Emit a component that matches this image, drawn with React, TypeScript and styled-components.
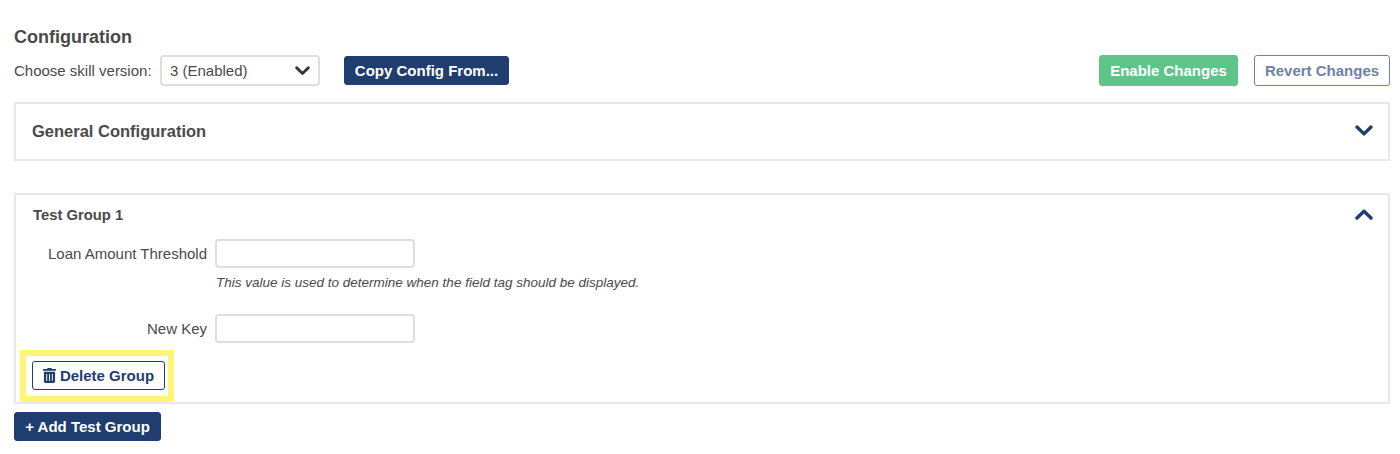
import React from "react";
import styled, { createGlobalStyle } from "styled-components";

const Global = createGlobalStyle`
  html, body { margin: 0; padding: 0; background: #fff; }
  body { font-family: "Liberation Sans", Arial, sans-serif; color: #4a4a4a; }
`;

const Page = styled.div`
  box-sizing: border-box;
  width: 1400px;
  height: 454px;
  overflow: hidden;
  padding: 26px 10px 0 14px;
`;

const Title = styled.h2`
  margin: 0;
  font-size: 18px;
  line-height: 22px;
  font-weight: 700;
  color: #4a4a4a;
`;

const Toolbar = styled.div`
  display: flex;
  align-items: center;
  height: 31px;
  margin-top: 7px;
`;

const ToolLabel = styled.span`
  font-size: 15px;
  color: #4a4a4a;
  width: 146px;
  white-space: nowrap;
`;

const SelectBox = styled.div`
  box-sizing: border-box;
  width: 160px;
  height: 31px;
  border: 2px solid #dedede;
  border-radius: 4px;
  display: flex;
  align-items: center;
  justify-content: space-between;
  padding: 0 8px;
  font-size: 15px;
  color: #4a4a4a;
`;

const Button = styled.button<{ $variant?: "primary" | "success" | "outline" | "ghost"; $h?: number }>`
  box-sizing: border-box;
  height: ${(p) => p.$h ?? 29}px;
  padding: 0;
  border-radius: 3px;
  font-family: "Liberation Sans", Arial, sans-serif;
  font-size: 15px;
  font-weight: 700;
  white-space: nowrap;
  display: inline-flex;
  align-items: center;
  justify-content: center;
  cursor: pointer;
  background: ${(p) => (p.$variant === "success" ? "#5fc48a" : p.$variant === "outline" || p.$variant === "ghost" ? "#fff" : "#1f3d6f")};
  color: ${(p) => (p.$variant === "outline" ? "#1f3d6f" : p.$variant === "ghost" ? "#6f82a6" : "#fff")};
  border: 1px solid ${(p) => (p.$variant === "success" ? "#5fc48a" : p.$variant === "ghost" ? "#6f82a6" : "#1f3d6f")};
`;

const CopyButton = styled(Button)`
  margin-left: 24px;
  width: 165px;
`;

const EnableButton = styled(Button)`
  width: 139px;
`;

const RevertButton = styled(Button)`
  width: 136px;
`;

const DeleteButton = styled(Button)`
  width: 133px;
`;

const ActionGroup = styled.div`
  margin-left: auto;
  display: flex;
  gap: 16px;
`;

const Panel = styled.section`
  box-sizing: border-box;
  border: 2px solid #e8e8e8;
`;

const GeneralPanel = styled(Panel)`
  height: 59px;
  margin-top: 16px;
  display: flex;
  align-items: center;
  justify-content: space-between;
  padding: 0 15.5px 0 16px;
`;

const GeneralTitle = styled.h3`
  margin: 0;
  font-size: 16.5px;
  font-weight: 700;
  color: #4a4a4a;
`;

const GroupPanel = styled(Panel)`
  height: 211px;
  margin-top: 32px;
  padding: 11px 15.5px 0 4px;
`;

const GroupHeader = styled.div`
  display: flex;
  align-items: center;
  justify-content: space-between;
  height: 18px;
  padding-left: 13px;
`;

const GroupTitle = styled.h4`
  margin: 0;
  font-size: 14.8px;
  line-height: 18px;
  font-weight: 700;
  color: #4a4a4a;
`;

const FieldRow = styled.div<{ $top: number }>`
  display: grid;
  grid-template-columns: 187px 200px;
  column-gap: 8px;
  align-items: center;
  margin-top: ${(p) => p.$top}px;
`;

const FieldLabel = styled.label`
  text-align: right;
  font-size: 15px;
  color: #4a4a4a;
`;

const TextField = styled.input`
  box-sizing: border-box;
  width: 200px;
  height: 29px;
  border: 2px solid #dedede;
  border-radius: 4px;
  background: #fff;
  outline: none;
`;

const Hint = styled.p`
  margin: 7px 0 0 196px;
  font-size: 13.5px;
  line-height: 16px;
  font-style: italic;
  color: #4a4a4a;
`;

const Highlight = styled.div`
  box-sizing: border-box;
  width: 154px;
  height: 52px;
  margin-top: 7px;
  border: 6px solid #fff577;
  padding: 5px 0 0 6px;
`;

const TrashIcon = styled.svg`
  width: 13px;
  height: 15px;
  margin-right: 4px;
  fill: currentColor;
`;

const AddButton = styled(Button)`
  margin-top: 8px;
  width: 147px;
`;

const ChevronIcon = styled.svg<{ $w: number; $lift: number }>`
  width: ${(p) => p.$w}px;
  height: ${(p) => p.$w * 0.62}px;
  margin-bottom: ${(p) => p.$lift}px;
  flex: none;
`;

const Chevron = ({ up, size = 18, color = "#1f3d6f", weight = 3.4, lift = 0 }: { up?: boolean; size?: number; color?: string; weight?: number; lift?: number }) => (
  <ChevronIcon $w={size} $lift={lift} viewBox="0 0 18 11" fill="none">
    <path
      d={up ? "M2 9 L9 2.2 L16 9" : "M2 2 L9 8.8 L16 2"}
      stroke={color}
      strokeWidth={weight}
      strokeLinecap="round"
      strokeLinejoin="round"
    />
  </ChevronIcon>
);

export default function App() {
  return (
    <Page>
      <Global />
      <Title>Configuration</Title>
      <Toolbar>
        <ToolLabel>Choose skill version:</ToolLabel>
        <SelectBox>
          3 (Enabled)
          <Chevron size={15} color="#333" />
        </SelectBox>
        <CopyButton>Copy Config From...</CopyButton>
        <ActionGroup>
          <EnableButton $variant="success" $h={31}>Enable Changes</EnableButton>
          <RevertButton $variant="ghost" $h={31}>Revert Changes</RevertButton>
        </ActionGroup>
      </Toolbar>
      <GeneralPanel>
        <GeneralTitle>General Configuration</GeneralTitle>
        <Chevron lift={2} />
      </GeneralPanel>
      <GroupPanel>
        <GroupHeader>
          <GroupTitle>Test Group 1</GroupTitle>
          <Chevron up />
        </GroupHeader>
        <FieldRow $top={15}>
          <FieldLabel>Loan Amount Threshold</FieldLabel>
          <TextField />
        </FieldRow>
        <Hint>This value is used to determine when the field tag should be displayed.</Hint>
        <FieldRow $top={23}>
          <FieldLabel>New Key</FieldLabel>
          <TextField />
        </FieldRow>
        <Highlight>
          <DeleteButton $variant="outline">
            <TrashIcon viewBox="0 0 448 512">
              <path d="M32 464a48 48 0 0 0 48 48h288a48 48 0 0 0 48-48V128H32zm272-256a16 16 0 0 1 32 0v224a16 16 0 0 1-32 0zm-96 0a16 16 0 0 1 32 0v224a16 16 0 0 1-32 0zm-96 0a16 16 0 0 1 32 0v224a16 16 0 0 1-32 0zM432 32H312l-9.4-18.7A24 24 0 0 0 281.1 0H166.8a23.7 23.7 0 0 0-21.4 13.3L136 32H16A16 16 0 0 0 0 48v32a16 16 0 0 0 16 16h416a16 16 0 0 0 16-16V48a16 16 0 0 0-16-16z" />
            </TrashIcon>
            Delete Group
          </DeleteButton>
        </Highlight>
      </GroupPanel>
      <AddButton>+ Add Test Group</AddButton>
    </Page>
  );
}
